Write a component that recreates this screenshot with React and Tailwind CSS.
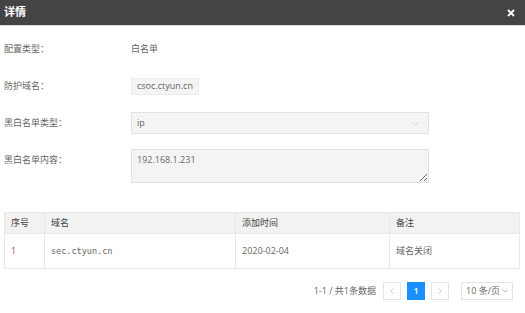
import React from "react";

const font = { fontFamily: '"Open Sans", "Noto Sans CJK SC", sans-serif' };

export default function App() {
  return (
    <div className="w-[525px] h-[313px] bg-white overflow-hidden text-[9px] text-[#666]" style={font}>
      <div className="h-[26px] bg-[#444444] border-b border-[#dcdcdc] flex items-center justify-between pl-[4px] pr-[8px]">
        <span className="text-white text-[11px] font-semibold">详情</span>
        <svg width="8" height="8" viewBox="0 0 8 8" className="mr-[2px]">
          <path d="M1 1L7 7M7 1L1 7" stroke="#fff" strokeWidth="1.8" />
        </svg>
      </div>

      <div className="pl-[4px] pr-[6px]">
        <div className="flex items-center h-[20px] mt-[13px]">
          <div className="w-[127px]">配置类型：</div>
          <div>白名单</div>
        </div>
        <div className="flex items-center h-[18px] mt-[18px]">
          <div className="w-[127px]">防护域名：</div>
          <div className="h-[17px] px-[5px] flex items-center bg-[#f4f4f4] border border-[#ececec]">csoc.ctyun.cn</div>
        </div>
        <div className="flex items-center h-[22px] mt-[17px]">
          <div className="w-[127px]">黑白名单类型：</div>
          <div className="w-[298px] h-[22px] bg-[#f4f4f4] border border-[#e2e2e2] flex items-center justify-between pl-[5px] pr-[9px]">
            <span>ip</span>
            <svg width="7" height="5" viewBox="0 0 7 5">
              <path d="M0.5 1L3.5 4L6.5 1" stroke="#c8c8c8" fill="none" strokeWidth="0.9" />
            </svg>
          </div>
        </div>
        <div className="flex items-start mt-[15px]">
          <div className="w-[127px] pt-[4px]">黑白名单内容：</div>
          <textarea
            readOnly
            value="192.168.1.231"
            className="w-[298px] h-[34px] bg-[#f4f4f4] border border-[#e2e2e2] px-[5px] pt-[3px] text-[9px] text-[#666] outline-none"
            style={font}
          />
        </div>

        <table className="mt-[29px] w-[515px] border-collapse table-fixed">
          <colgroup>
            <col className="w-[40px]" />
            <col className="w-[191px]" />
            <col className="w-[154px]" />
            <col className="w-[130px]" />
          </colgroup>
          <thead>
            <tr className="h-[21px] bg-[#f2f2f2] text-[#444]">
              <th className="text-left font-normal pl-[6px] border border-[#e8e8e8]">序号</th>
              <th className="text-left font-normal pl-[6px] border border-[#e8e8e8]">域名</th>
              <th className="text-left font-normal pl-[6px] border border-[#e8e8e8]">添加时间</th>
              <th className="text-left font-normal pl-[6px] border border-[#e8e8e8]">备注</th>
            </tr>
          </thead>
          <tbody>
            <tr className="h-[35px]">
              <td className="pl-[6px] border border-[#e8e8e8] text-[#a05050]">1</td>
              <td className="pl-[6px] border border-[#e8e8e8]" style={{ fontFamily: '"DejaVu Sans Mono", monospace', fontSize: "8.5px" }}>sec.ctyun.cn</td>
              <td className="pl-[6px] border border-[#e8e8e8]">2020-02-04</td>
              <td className="pl-[6px] border border-[#e8e8e8]">域名关闭</td>
            </tr>
          </tbody>
        </table>

        <div className="flex items-center justify-end mt-[13px] pr-[6px] gap-[6px]">
          <span className="mr-[1px]">1-1 / 共1条数据</span>
          <div className="w-[18px] h-[18px] border border-[#e4e4e4] flex items-center justify-center">
            <svg width="4" height="6" viewBox="0 0 4 6"><path d="M3.5 0.5L1 3L3.5 5.5" stroke="#c8c8c8" fill="none" strokeWidth="0.8" /></svg>
          </div>
          <div className="w-[18px] h-[18px] bg-[#1890ff] text-white flex items-center justify-center font-semibold">1</div>
          <div className="w-[18px] h-[18px] border border-[#e4e4e4] flex items-center justify-center">
            <svg width="4" height="6" viewBox="0 0 4 6"><path d="M0.5 0.5L3 3L0.5 5.5" stroke="#c8c8c8" fill="none" strokeWidth="0.8" /></svg>
          </div>
          <div className="ml-[6px] h-[18px] w-[52px] border border-[#e4e4e4] flex items-center pl-[4px] gap-[2px]">
            <span>10 条/页</span>
            <svg width="6" height="4" viewBox="0 0 6 4"><path d="M0.5 0.5L3 3L5.5 0.5" stroke="#aaa" fill="none" strokeWidth="0.8" /></svg>
          </div>
        </div>
      </div>
    </div>
  );
}
